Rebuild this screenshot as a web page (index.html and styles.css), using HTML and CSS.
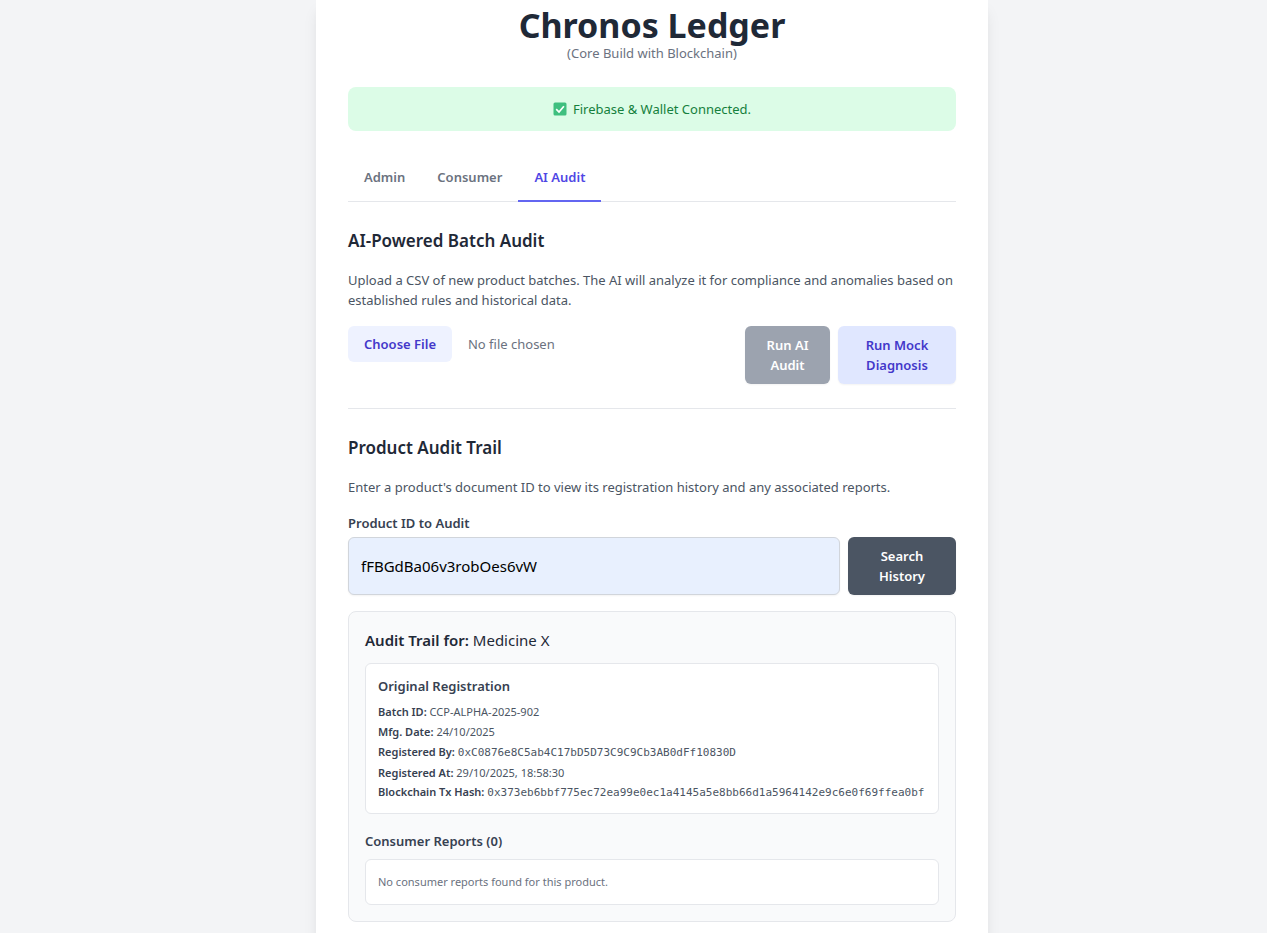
FILE: index.html

```html
<!DOCTYPE html>
<html lang="en">
<head>
  <meta charset="UTF-8">
  <meta name="viewport" content="width=device-width, initial-scale=1.0">
  <title>Chronos Ledger</title>
  <link rel="stylesheet" href="styles.css">
</head>
<body>
  <main class="card">
    <header class="page-head">
      <h1>Chronos Ledger</h1>
      <p>(Core Build with Blockchain)</p>
    </header>

    <div class="status">
      <svg class="status-icon" viewBox="0 0 14 14" width="14" height="14" aria-hidden="true">
        <rect x="0.5" y="0.5" width="13" height="13" rx="1.5" fill="#3fbf7f"/>
        <path d="M3.2 7.2 L6 10 L10.9 4.2" fill="none" stroke="#fff" stroke-width="1.7"/>
      </svg>
      <span>Firebase &amp; Wallet Connected.</span>
    </div>

    <nav class="tabs">
      <a class="tab">Admin</a>
      <a class="tab">Consumer</a>
      <a class="tab active">AI Audit</a>
    </nav>

    <section class="section batch">
      <h2>AI-Powered Batch Audit</h2>
      <p class="hint">Upload a CSV of new product batches. The AI will analyze it for compliance and anomalies based on established rules and historical data.</p>
      <div class="upload-row">
        <input class="file-input" type="file" accept=".csv">
        <button class="btn btn-disabled">Run AI Audit</button>
        <button class="btn btn-mock">Run Mock Diagnosis</button>
      </div>
    </section>

    <section class="section trail">
      <h2>Product Audit Trail</h2>
      <p class="hint">Enter a product's document ID to view its registration history and any associated reports.</p>
      <label class="field-label" for="product-id">Product ID to Audit</label>
      <div class="search-row">
        <input class="text-input" id="product-id" type="text" value="fFBGdBa06v3robOes6vW">
        <button class="btn btn-dark">Search History</button>
      </div>

      <div class="result">
        <h3>Audit Trail for: <span>Medicine X</span></h3>
        <div class="box">
          <h4>Original Registration</h4>
          <ul class="facts">
            <li><b>Batch ID:</b> CCP-ALPHA-2025-902</li>
            <li><b>Mfg. Date:</b> 24/10/2025</li>
            <li><b>Registered By:</b> <code>0xC0876e8C5ab4C17bD5D73C9C9Cb3AB0dFf10830D</code></li>
            <li><b>Registered At:</b> 29/10/2025, 18:58:30</li>
            <li class="hash"><b>Blockchain Tx Hash:</b> <code>0x373eb6bbf775ec72ea99e0ec1a4145a5e8bb66d1a5964142e9c6e0f69ffea0bf</code></li>
          </ul>
        </div>
        <h4 class="reports-head">Consumer Reports (0)</h4>
        <div class="box empty">No consumer reports found for this product.</div>
      </div>
    </section>
  </main>
</body>
</html>
```

FILE: styles.css

```css
* {
  box-sizing: border-box;
}
html, body {
  height: 933px;
  overflow: hidden;
}
body {
  margin: 0;
  background: #f3f4f6;
  color: #1f2937;
  font-family: "Noto Sans", "Open Sans", sans-serif;
  font-size: 13px;
  line-height: 20px;
}
h1, h2, h3, h4, p, ul {
  margin: 0;
  padding: 0;
}
.card {
  width: 672px;
  min-height: 1000px;
  margin: 0 0 0 316px;
  padding: 5px 32px 32px;
  background: #fff;
  box-shadow: 0 10px 15px -3px rgba(0,0,0,0.1), 0 4px 6px -4px rgba(0,0,0,0.1);
}
.page-head {
  text-align: center;
}
.page-head h1 {
  font-size: 34px;
  line-height: 40px;
  font-weight: 700;
}
.page-head p {
  margin-top: -2px;
  font-size: 13px;
  color: #6b7280;
}
.status {
  display: flex;
  justify-content: center;
  align-items: center;
  gap: 6px;
  height: 44px;
  margin-top: 24px;
  border-radius: 8px;
  background: #dcfce7;
  color: #15803d;
}
.tabs {
  display: flex;
  margin-top: 18px;
  border-bottom: 1px solid #e5e7eb;
}
.tab {
  margin-bottom: -1px;
  padding: 18px 16px 13px;
  border-bottom: 2px solid transparent;
  color: #6b7280;
  font-weight: 600;
}
.tab.active {
  color: #4f46e5;
  border-bottom-color: #6366f1;
}
.section h2 {
  font-size: 17px;
  line-height: 28px;
  font-weight: 600;
}
.batch {
  padding: 25px 0 24px;
  border-bottom: 1px solid #e5e7eb;
}
.hint {
  margin-top: 15px;
  color: #4b5563;
}
.upload-row {
  display: flex;
  align-items: flex-start;
  gap: 8px;
  margin-top: 16px;
}
.file-input {
  flex: 1;
  min-width: 0;
  color: #6b7280;
  font: inherit;
}
.file-input::file-selector-button {
  height: 36px;
  margin-right: 16px;
  padding: 0 16px;
  border: 0;
  border-radius: 6px;
  background: #eef2ff;
  color: #4338ca;
  font: inherit;
  font-weight: 600;
}
.btn {
  padding: 9px 16px;
  border: 0;
  border-radius: 6px;
  font: inherit;
  font-weight: 600;
  box-shadow: 0 1px 2px rgba(0,0,0,0.05);
}
.btn-disabled {
  width: 85px;
  background: #9ca3af;
  color: #fff;
}
.btn-mock {
  width: 118px;
  background: #e0e7ff;
  color: #4338ca;
}
.btn-dark {
  width: 108px;
  flex: none;
  background: #4b5563;
  color: #fff;
}
.trail {
  padding-top: 25px;
}
.field-label {
  display: block;
  margin-top: 16px;
  color: #374151;
  font-weight: 600;
}
.search-row {
  display: flex;
  gap: 8px;
  margin-top: 4px;
}
.text-input {
  flex: 1;
  min-width: 0;
  padding: 0 12px;
  border: 1px solid #d1d5db;
  border-radius: 6px;
  background: #e8f0fe;
  color: #000;
  font: inherit;
  font-size: 15px;
  box-shadow: 0 1px 2px rgba(0,0,0,0.05);
}
.result {
  margin-top: 16px;
  padding: 16px;
  border: 1px solid #e5e7eb;
  border-radius: 8px;
  background: #f9fafb;
}
.result h3 {
  font-size: 15px;
  line-height: 24px;
  font-weight: 600;
}
.result h3 span {
  font-weight: 400;
}
.box {
  margin-top: 11px;
  padding: 12px;
  border: 1px solid #e5e7eb;
  border-radius: 6px;
  background: #fff;
}
.box h4, .reports-head {
  color: #374151;
  font-size: 13px;
  font-weight: 600;
}
.facts {
  margin-top: 6px;
  list-style: none;
  color: #4b5563;
  font-size: 11px;
}
.facts b {
  font-weight: 600;
  color: #374151;
}
.facts code {
  font-family: "DejaVu Sans Mono", monospace;
  font-size: 11px;
}
.hash {
  word-break: break-all;
  line-height: 17px;
}
.reports-head {
  margin-top: 17px;
}
.reports-head + .box {
  margin-top: 8px;
}
.empty {
  color: #6b7280;
  font-size: 11px;
}
```
